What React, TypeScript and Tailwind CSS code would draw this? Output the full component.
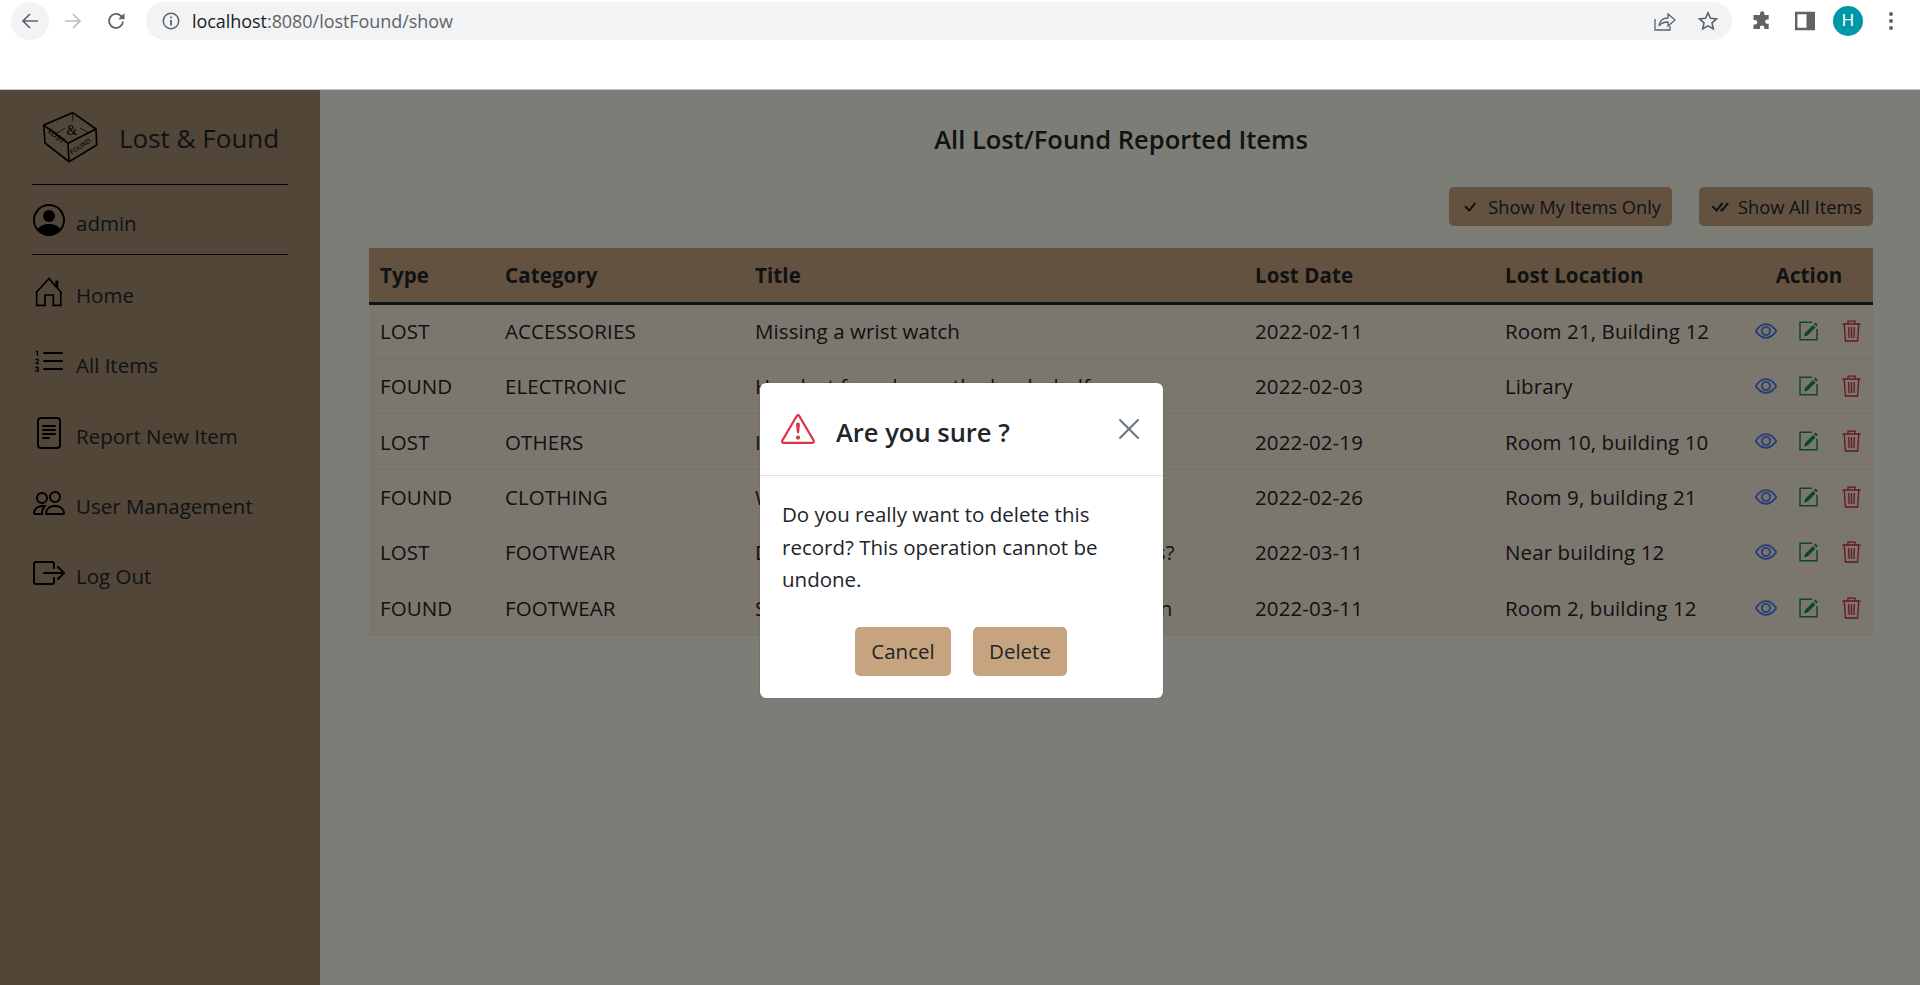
import {
  BsBoxArrowRight,
  BsCheck,
  BsCheckAll,
  BsExclamationTriangle,
  BsEye,
  BsFileText,
  BsListOl,
  BsPeople,
  BsPersonCircle,
  BsXLg,
} from "react-icons/bs";
import type { IconType } from "react-icons";

const rows = [
  ["LOST", "ACCESSORIES", "Missing a wrist watch", "2022-02-11", "Room 21, Building 12"],
  ["FOUND", "ELECTRONIC", "Headset found near the book shelf", "2022-02-03", "Library"],
  ["LOST", "OTHERS", "I lost my bag", "2022-02-19", "Room 10, building 10"],
  ["FOUND", "CLOTHING", "White jacket", "2022-02-26", "Room 9, building 21"],
  ["LOST", "FOOTWEAR", "Did anyone see my pair of brown sneakers?", "2022-03-11", "Near building 12"],
  ["FOUND", "FOOTWEAR", "Sandals found in the main halls of a garden", "2022-03-11", "Room 2, building 12"],
];

function HomeIcon({ className }: { className?: string }) {
  return (
    <svg viewBox="0 0 32 32" className={className} fill="none" stroke="currentColor" strokeWidth="1.7">
      <path d="M2.7 17 16 2.6 28.7 17" />
      <path d="M3.7 15.5v13.8H12V19h8.3v10.3h7.5V15.5" />
      <path d="M22.3 4.5h3v7h-3z" fill="currentColor" stroke="none" />
    </svg>
  );
}

const nav: { label: string; icon: IconType | typeof HomeIcon }[] = [
  { label: "Home", icon: HomeIcon },
  { label: "All Items", icon: BsListOl },
  { label: "Report New Item", icon: BsFileText },
  { label: "User Management", icon: BsPeople },
  { label: "Log Out", icon: BsBoxArrowRight },
];

function Logo() {
  return (
    <svg viewBox="0 0 55 51" className="h-[51px] w-[55px]" fill="none" stroke="#000" strokeWidth="1.6">
      <path d="M0.7 13 29.7 0.7 53 17l.7 16L26 49.7 2 31Z" />
      <path d="M0.7 13 25 31.3 53 17M25 31.3 26 49.7" />
      <path d="M13 22l9-6M37 16l9 5M29.7 1v8" strokeWidth="0.7" />
      <text x="29" y="23" fontSize="14" textAnchor="middle" fill="#000" stroke="none" fontFamily="'Liberation Serif', serif">&amp;</text>
      <text fontSize="7.5" fill="#000" stroke="none" fontFamily="'DejaVu Sans', sans-serif" transform="translate(4.5 20) rotate(40)">LOST</text>
      <text fontSize="6.5" fill="#000" stroke="none" fontFamily="'DejaVu Sans', sans-serif" transform="translate(29 43) rotate(-35)">FOUND</text>
    </svg>
  );
}

function EditIcon() {
  return (
    <svg viewBox="0 0 20 20" className="h-[20px] w-[20px]">
      <path d="M13 1.2H1v17.6h17V8" fill="none" stroke="#1f8a66" strokeWidth="1.5" />
      <path d="M5 15.5l1-3.5 8-8 2.6 2.6-8 8Z M15 3l1.4-1.6 2.4 2.4L17.3 5.4Z" fill="#159050" />
    </svg>
  );
}

function TrashIcon() {
  return (
    <svg viewBox="0 0 19 22" className="h-[22px] w-[19px]" fill="none" stroke="#d02a3a" strokeWidth="1.3">
      <path d="M0.5 4h18M6 4V1.2h7V4" />
      <path d="M2.2 4 3.4 21h12.2L16.8 4" />
      <path d="M6.7 7l.4 11M9.5 7v11M12.3 7l-.4 11" />
    </svg>
  );
}

function BrowserBar() {
  return (
    <div className="flex h-[90px] items-start border-b border-[#c4c4c4] bg-white">
      <div className="flex h-[42px] items-center pl-[11px]">
        <div className="flex h-[38px] w-[38px] items-center justify-center rounded-full bg-[#f1f3f4]">
          <svg viewBox="0 0 20 20" className="h-[20px] w-[20px]" fill="none" stroke="#5f6368" strokeWidth="1.7">
            <path d="M18 10H3M10 3l-7 7 7 7" />
          </svg>
        </div>
        <svg viewBox="0 0 20 20" className="ml-[14px] h-[20px] w-[20px]" fill="none" stroke="#babcbe" strokeWidth="1.7">
          <path d="M2 10h15M10 3l7 7-7 7" />
        </svg>
        <svg viewBox="0 0 20 20" className="ml-[23px] h-[20px] w-[20px]" fill="none" stroke="#5f6368" strokeWidth="1.8">
          <path d="M17 10.5a7 7 0 1 1-2-5.5l2.5 2.5" />
          <path d="M18.5 2v6.3h-6.3" fill="#5f6368" stroke="none" />
        </svg>
      </div>
      <div className="ml-[20px] mt-[2px] flex h-[38px] w-[1586px] items-center rounded-full bg-[#f1f3f4] pl-[16px] pr-[14px]">
        <svg viewBox="0 0 18 18" className="h-[18px] w-[18px]" fill="none" stroke="#5f6368" strokeWidth="1.5">
          <circle cx="9" cy="9" r="7.7" />
          <path d="M9 8v5.5M9 4.5v1.8" strokeWidth="1.8" />
        </svg>
        <span className="ml-[12px] text-[18px] leading-none tracking-[-0.05px] text-[#202124]">
          localhost<span className="text-[#5f6368]">:8080/lostFound/show</span>
        </span>
        <svg viewBox="0 0 22 20" className="ml-auto h-[20px] w-[22px]" fill="none" stroke="#5f6368" strokeWidth="1.3">
          <path d="M1 8v11h15v-4" />
          <path d="M5 15c.5-5 4-8 9-8V3l7 6-7 6v-4c-4 0-7 1-9 4Z" />
        </svg>
        <svg viewBox="0 0 20 20" className="ml-[22px] h-[20px] w-[20px]" fill="none" stroke="#5f6368" strokeWidth="1.6">
          <path d="M10 1.8l2.5 5.5 6 .6-4.5 4 1.3 5.9-5.3-3-5.3 3L6 11.9l-4.5-4 6-.6Z" />
        </svg>
      </div>
      <div className="flex h-[42px] items-center">
        <svg viewBox="0 0 20 20" className="ml-[20px] h-[20px] w-[20px]" fill="#5f6368">
          <path d="M8 2.5a2.2 2.2 0 0 1 4.4 0V4h4.3v4.4h-1.4a2.2 2.2 0 0 0 0 4.4h1.4V18h-4.4v-1.3a2.2 2.2 0 0 0-4.4 0V18H1.5v-4.4H3a2.3 2.3 0 0 0 0-4.6H1.5V4H8Z" />
        </svg>
        <svg viewBox="0 0 20 20" className="ml-[23px] h-[20px] w-[20px]" fill="none" stroke="#5f6368" strokeWidth="2.4">
          <path d="M1.2 2h17.6v16H1.2Z" />
          <path d="M15 2v16" strokeWidth="7" />
        </svg>
        <div className="ml-[18px] flex h-[30px] w-[30px] items-center justify-center rounded-full bg-[#0097a7] font-['Liberation_Sans',sans-serif] text-[17px] text-white">
          H
        </div>
        <div className="ml-[26px] flex flex-col gap-[3px]">
          <span className="h-[4px] w-[4px] rounded-full bg-[#5f6368]" />
          <span className="h-[4px] w-[4px] rounded-full bg-[#5f6368]" />
          <span className="h-[4px] w-[4px] rounded-full bg-[#5f6368]" />
        </div>
      </div>
    </div>
  );
}

function Sidebar() {
  return (
    <aside className="w-[320px] shrink-0 bg-[#a28c70] px-[32px] text-[20.5px] text-black">
      <div className="flex h-[94px] items-center pl-[11px]">
        <Logo />
        <span className="ml-[21px] pt-[2px] text-[26px] text-[#212529]">Lost &amp; Found</span>
      </div>
      <div className="flex h-[71px] items-center gap-[11px] border-y border-black pl-[1px]">
        <BsPersonCircle className="h-[32px] w-[32px]" />
        <span className="pt-[8px] text-[#212529]">admin</span>
      </div>
      <nav className="flex flex-col gap-[38.3px] pt-[21px]">
        {nav.map((item) => (
          <div key={item.label} className="flex h-[32px] items-center gap-[11px] pl-[1px]">
            <item.icon className="h-[32px] w-[32px]" />
            <span className="pt-[7px] text-[#212529]">{item.label}</span>
          </div>
        ))}
      </nav>
    </aside>
  );
}

function ItemsTable() {
  return (
    <table className="w-full table-fixed border-collapse text-[20.5px] tracking-[0.1px] text-[#212529]">
      <thead>
        <tr className="h-[55px] border-b-[3px] border-[#212529] bg-[#c6a480] text-left font-bold">
          <th className="w-[125px] px-[11px] pt-[2px]">Type</th>
          <th className="w-[250px] px-[11px] pt-[2px]">Category</th>
          <th className="w-[500px] px-[11px] pt-[2px]">Title</th>
          <th className="w-[250px] px-[11px] pt-[2px]">Lost Date</th>
          <th className="w-[251px] px-[11px] pt-[2px]">Lost Location</th>
          <th className="pt-[2px] text-center">Action</th>
        </tr>
      </thead>
      <tbody>
        {rows.map((r) => (
          <tr key={r[2]} className="h-[55.4px] border-b border-[#dee2e6] bg-[#f6eedc]">
            {r.map((c) => (
              <td key={c} className="truncate px-[11px] pt-[1px]">
                {c}
              </td>
            ))}
            <td>
              <div className="flex items-center justify-center">
                <span className="flex w-[43px] justify-center">
                  <BsEye className="h-[22px] w-[22px] stroke-[0.3] text-[#3a70ee]" />
                </span>
                <span className="flex w-[43px] justify-center">
                  <EditIcon />
                </span>
                <span className="flex w-[43px] justify-center">
                  <TrashIcon />
                </span>
              </div>
            </td>
          </tr>
        ))}
      </tbody>
    </table>
  );
}

function ConfirmDialog() {
  return (
    <div className="absolute left-[760px] top-[293px] w-[403px] rounded-[6px] bg-white text-[#212529] shadow-[0_0_1px_rgba(0,0,0,0.6)]">
      <div className="flex h-[93px] items-center border-b border-[#dee2e6] pl-[21px] pr-[21px]">
        <BsExclamationTriangle className="h-[34px] w-[34px] text-[#dc3545]" />
        <span className="ml-[21px] pt-[6px] text-[25.5px] font-semibold">Are you sure ?</span>
        <BsXLg className="ml-auto h-[26px] w-[26px] stroke-[0.4] text-[#6c757d]" />
      </div>
      <div className="px-[22px] pt-[22px] text-[20.5px] leading-[32.5px]">
        Do you really want to delete this record? This operation cannot be undone.
      </div>
      <div className="flex justify-center gap-[22px] pb-[22px] pr-[1px] pt-[31px] text-[20.5px]">
        <button className="h-[49px] w-[96px] rounded-[5px] bg-[#c7a480] pt-[1px]">Cancel</button>
        <button className="h-[49px] w-[94px] rounded-[5px] bg-[#c7a480] pt-[1px]">Delete</button>
      </div>
    </div>
  );
}

export default function App() {
  return (
    <div className="flex h-[985px] w-[1920px] flex-col overflow-hidden bg-white font-['Open_Sans',sans-serif]">
      <BrowserBar />
      <div className="relative flex flex-1">
        <Sidebar />
        <main className="flex-1 bg-[#f8faec] pl-[49px] pr-[47px]">
          <h1 className="pt-[32px] text-center text-[25.5px] font-semibold leading-[34px] text-[#212529]">
            All Lost/Found Reported Items
          </h1>
          <div className="flex justify-end gap-[27px] pt-[31px] text-[18.25px] text-[#212529]">
            <button className="flex h-[39px] items-center gap-[7px] rounded-[5px] bg-[#c6a480] pl-[10px] pr-[11px]">
              <BsCheck className="h-[22px] w-[22px]" />
              Show My Items Only
            </button>
            <button className="flex h-[39px] items-center gap-[7px] rounded-[5px] bg-[#c6a480] pl-[10px] pr-[11px]">
              <BsCheckAll className="h-[22px] w-[22px]" />
              Show All Items
            </button>
          </div>
          <div className="pt-[22px]">
            <ItemsTable />
          </div>
        </main>
        <div className="absolute inset-0 bg-black/50" />
        <ConfirmDialog />
      </div>
    </div>
  );
}
